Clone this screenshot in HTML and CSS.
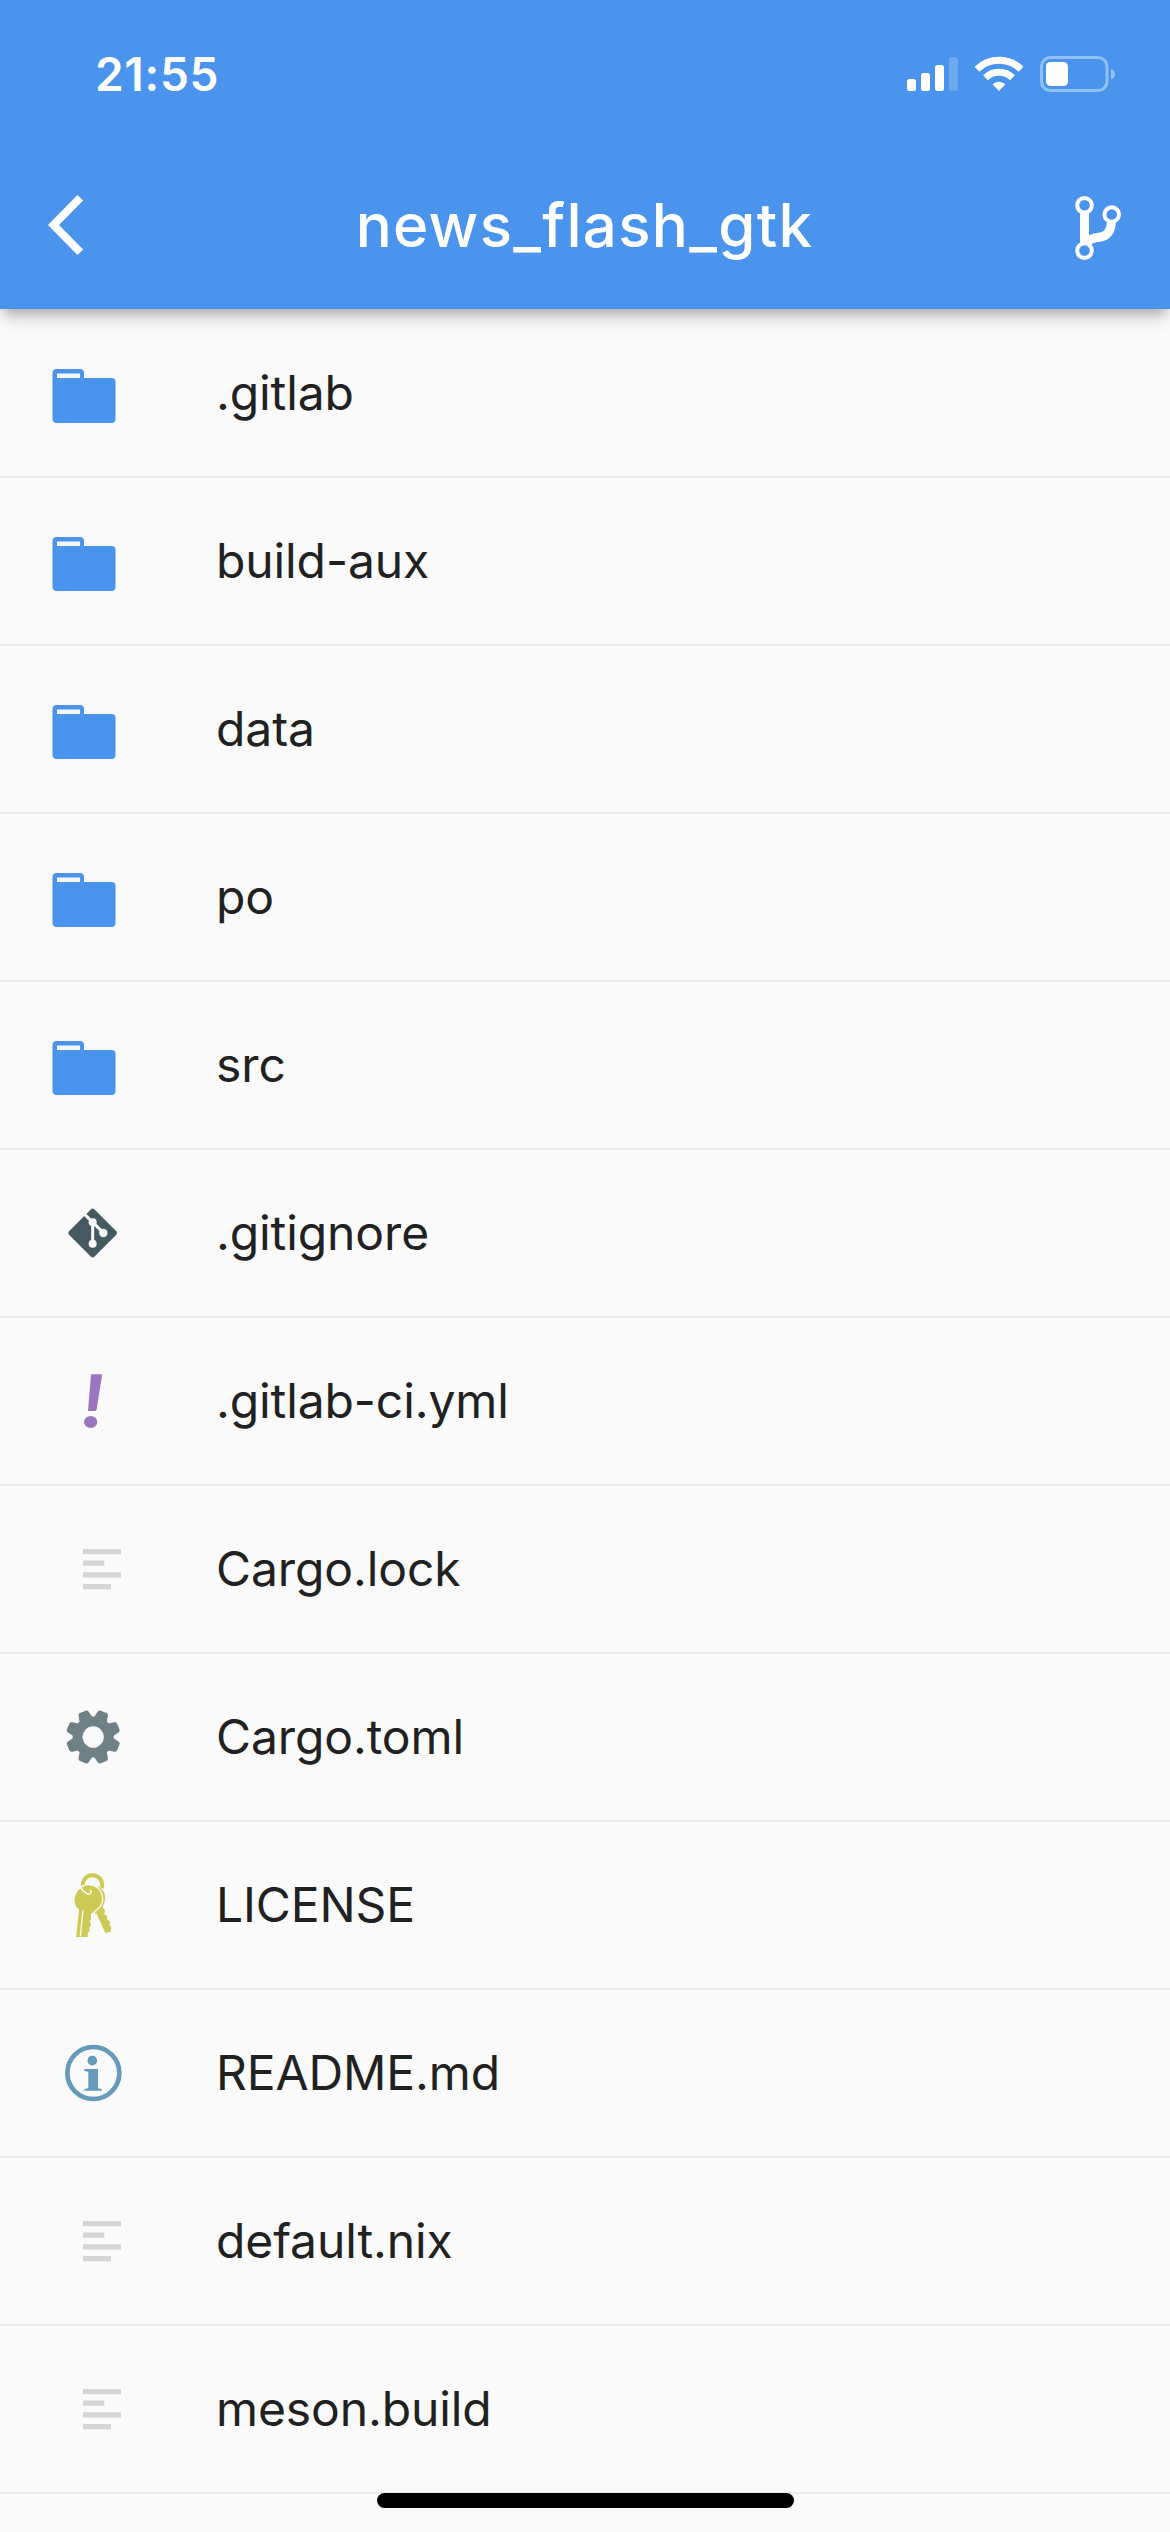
FILE: index.html
```html
<!DOCTYPE html>
<html lang="en">
<head>
<meta charset="utf-8">
<title>news_flash_gtk</title>
<link rel="stylesheet" href="styles.css">
</head>
<body>
<svg class="sprite" width="0" height="0" aria-hidden="true">
  <symbol id="folder" viewBox="0 0 168 166">
    <path fill="#4a94ed" fill-rule="evenodd" d="M56.5 59H80a4 4 0 0 1 4 4v5h27.500a4 4 0 0 1 4 4v37a4 4 0 0 1-4 4h-55a4 4 0 0 1-4-4V63a4 4 0 0 1 4-4zM57 63.500V68h23v-4.500z"/>
  </symbol>
  <symbol id="text" viewBox="0 0 168 166">
    <path fill="#d4d6d6" d="M83 63h38v5.300H83zM83 74.500h21.300v5.300H83zM83 86.200h38v5.300H83zM83 97.900h28v5.300H83z"/>
  </symbol>
</svg>
<div class="screen">
  <header class="header">
    <div class="status">
      <span class="time">21:55</span>
      <svg class="indicators" width="210" height="40" viewBox="907 54 210 40">
        <g fill="#fff">
          <rect x="907" y="79" width="9" height="12" rx="2.500"/>
          <rect x="921" y="73" width="9" height="18" rx="2.500"/>
          <rect x="935" y="65" width="9" height="26" rx="2.500"/>
          <rect x="949" y="57" width="9" height="34" rx="2.500" opacity=".2"/>
          <path d="M999 91l-6.400-6.700a9.300 9.300 0 0 1 12.800 0z"/>
          <rect x="1046" y="62" width="22" height="24" rx="4.500"/>
          <path d="M1111 68.700c5.300 2 5.300 8.800 0 10.800z" opacity=".45"/>
        </g>
        <g fill="none" stroke="#fff">
          <path stroke-width="7" d="M977 69.200a31.500 31.500 0 0 1 44 0M985.500 77.700a19.500 19.500 0 0 1 27 0"/>
          <rect x="1041.500" y="57.500" width="65.500" height="33" rx="9" stroke-width="3" opacity=".4"/>
        </g>
      </svg>
    </div>
    <div class="bar">
      <svg class="back" width="36" height="60" viewBox="0 0 36 60"><path d="M32.300 2.800L5.500 30l26.800 27.200" fill="none" stroke="#fff" stroke-width="8"/></svg>
      <h1 class="title">news_flash_gtk</h1>
      <svg class="branch" width="47" height="66" viewBox="1075 195 47 66">
        <g fill="none" stroke="#fff">
          <path stroke-width="9" d="M1084.500 212v31M1111.500 221c-.500 13-7 16-14 16.500q-7 .500-11.500 6"/>
          <g stroke-width="4" fill="#4a94ed">
            <circle cx="1084.500" cy="205.300" r="7.300"/>
            <circle cx="1084.500" cy="250.600" r="7.300"/>
            <circle cx="1111.700" cy="214.500" r="7.300"/>
          </g>
        </g>
      </svg>
    </div>
  </header>
  <ul class="files">
    <li class="row"><svg class="icon"><use href="#folder"/></svg><span class="name">.gitlab</span></li>
    <li class="row"><svg class="icon"><use href="#folder"/></svg><span class="name">build-aux</span></li>
    <li class="row"><svg class="icon"><use href="#folder"/></svg><span class="name">data</span></li>
    <li class="row"><svg class="icon"><use href="#folder"/></svg><span class="name">po</span></li>
    <li class="row"><svg class="icon"><use href="#folder"/></svg><span class="name">src</span></li>
    <li class="row">
      <svg class="icon" viewBox="0 0 168 166"><g transform="translate(50 40) scale(.33333)">
        <path fill="#455a60" stroke="#455a60" stroke-width="14" stroke-linejoin="round" d="M128 63l66 66-66 66-66-66z"/>
        <g stroke="#fafafa" stroke-width="9" fill="none"><path d="M98 67l30 30 32 31M128 97v63"/></g>
        <g fill="#fafafa"><circle cx="128" cy="97" r="12"/><circle cx="128" cy="161" r="12"/><circle cx="160" cy="129" r="12.500"/></g>
      </g></svg><span class="name">.gitignore</span></li>
    <li class="row">
      <svg class="icon" viewBox="0 0 168 166"><g transform="translate(50 42) scale(.33333)" fill="#9b76c0">
        <path d="M123 43h29q4 0 4 4l-16 101q-1 5-5 5h-21z"/><ellipse cx="122" cy="186" rx="20" ry="18"/>
      </g></svg><span class="name">.gitlab-ci.yml</span></li>
    <li class="row"><svg class="icon"><use href="#text"/></svg><span class="name">Cargo.lock</span></li>
    <li class="row">
      <svg class="icon" viewBox="0 0 168 166"><g transform="translate(93.200 83) rotate(22.500)" fill="#708087">
        <path fill-rule="evenodd" d="M-20.500 0a20.500 20.500 0 1 0 41 0a20.500 20.500 0 1 0-41 0zM-10.700 0a10.700 10.700 0 1 1 21.400 0a10.700 10.700 0 1 1-21.400 0z"/>
        <g id="teeth"><path id="tooth" d="M-7-18l1.500-7q.400-2.200 2.400-2.200h6.200q2 0 2.400 2.200l1.500 7z"/>
        <use href="#tooth" transform="rotate(45)"/><use href="#tooth" transform="rotate(90)"/><use href="#tooth" transform="rotate(135)"/></g>
        <use href="#teeth" transform="rotate(180)"/>
      </g></svg><span class="name">Cargo.toml</span></li>
    <li class="row">
      <svg class="icon" viewBox="0 0 168 166"><g transform="translate(50 38) scale(.33333)">
        <path fill="none" stroke="#cbcb55" stroke-width="12" d="M102 88a29 29 0 1 1 53-4"/>
        <path fill="#cbcb55" d="M138 78c20 5 29 22 27 39-1 11-4 17-7 24l7 11-2 11 9 6-1 10 9 5-1 11 5 8-2 12-18 4-36-74z"/>
        <path fill="#cbcb55" stroke="#fafafa" stroke-width="4" d="M105 75c29-5 53 13 53 42 0 16-8 26-19 34l-14 12 0 15-4 7 5 10-6 8 1 10-6 8 1 12H76l9-84c-11-7-14-20-13-33 2-18 14-35 33-41z"/>
        <path fill="none" stroke="#fafafa" stroke-width="4" d="M99 150l-8 80M137 160l29 64"/>
        <path fill="none" stroke="#fafafa" stroke-width="4" d="M90 79c6 12 13 18 23 23 9 2 15-7 7-12"/>
      </g></svg><span class="name">LICENSE</span></li>
    <li class="row">
      <svg class="icon" viewBox="0 0 168 166"><g transform="translate(50 40) scale(.33333)" fill="#659ab9">
        <circle cx="130" cy="129" r="78" fill="none" stroke="#659ab9" stroke-width="14"/>
        <circle cx="127" cy="92" r="14.500"/><path d="M103 117h41v58l11 2v5h-52v-5l12-2v-50l-12-2z"/>
      </g></svg><span class="name">README.md</span></li>
    <li class="row"><svg class="icon"><use href="#text"/></svg><span class="name">default.nix</span></li>
    <li class="row"><svg class="icon"><use href="#text"/></svg><span class="name">meson.build</span></li>
  </ul>
  <div class="home"></div>
</div>
</body>
</html>
```
FILE: styles.css
```css
* { box-sizing: border-box; }
body {
  margin: 0;
  background: #fafafa;
  color: #212121;
  font-family: Inter, "Liberation Sans", sans-serif;
}
.sprite { display: block; }
.screen { width: 1170px; height: 2532px; overflow: hidden; position: relative; }
.header {
  position: relative;
  height: 309px;
  background: #4a94ed;
  color: #fff;
  box-shadow: 0 12px 15px -3px rgba(0,0,0,.18), 0 6px 10px -4px rgba(0,0,0,.2);
}
.status {
  height: 141px;
  padding: 7px 53px 0 95px;
  display: flex;
  align-items: center;
  justify-content: space-between;
}
.time { font-size: 46px; font-weight: 560; letter-spacing: 0.7px; }
.bar {
  height: 168px;
  padding: 0 48px;
  display: flex;
  align-items: center;
  justify-content: space-between;
}
.title { margin: 0 0 0 10px; font-size: 60px; font-weight: 500; letter-spacing: 1.3px; line-height: 72px; }
.branch { margin-top: 6px; }
.files { list-style: none; margin: 0; padding: 1px 0 0; }
.row {
  height: 168px;
  border-bottom: 2px solid #ebebeb;
  display: flex;
  align-items: center;
  font-size: 48px;
  letter-spacing: -0.1px;
}
.icon { width: 168px; height: 166px; margin-right: 48px; flex: none; }
.name { padding-bottom: 2px; }
.home {
  position: absolute;
  left: 377px;
  top: 2493px;
  width: 417px;
  height: 15px;
  border-radius: 8px;
  background: #000;
}
```
